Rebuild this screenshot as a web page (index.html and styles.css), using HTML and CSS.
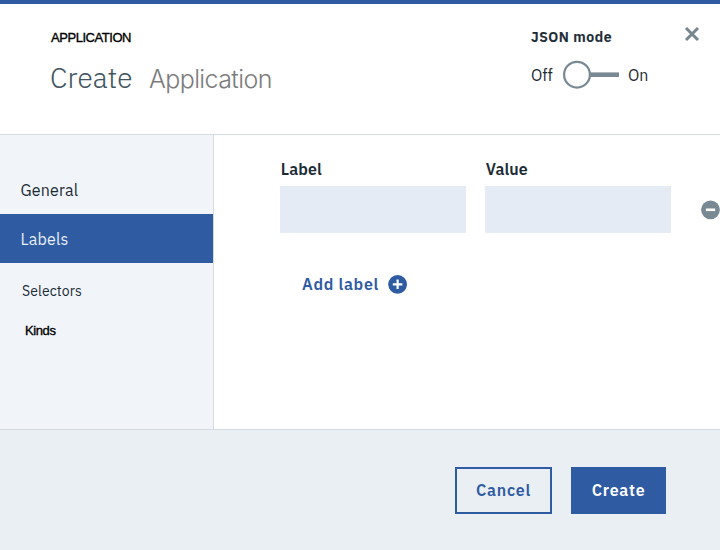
FILE: index.html
```html
<!DOCTYPE html>
<html lang="en">
<head>
<meta charset="utf-8">
<title>Create Application</title>
<link rel="stylesheet" href="styles.css">
</head>
<body>
<div class="modal">
  <header class="header">
    <div class="heading">
      <div class="eyebrow">APPLICATION</div>
      <h1 class="title"><span class="title-action">Create</span><span class="title-kind">Application</span></h1>
    </div>
    <div class="mode">
      <div class="mode-label">JSON mode</div>
      <div class="mode-switch">
        <span class="off">Off</span>
        <svg class="toggle" width="58" height="30" viewBox="0 0 58 30" fill="none" stroke="#798993"><path d="M28 14.7h29" stroke-width="4.6"/><circle cx="15" cy="14.7" r="12.9" fill="#fff" stroke-width="2.2"/></svg>
        <span class="on">On</span>
      </div>
    </div>
    <button class="close" aria-label="Close"><svg width="16" height="16" viewBox="0 0 16 16" fill="none" stroke="#75868f" stroke-width="3"><path d="M2 2l12 12M14 2L2 14"/></svg></button>
  </header>
  <div class="body">
    <nav class="sidebar">
      <a class="item general"><span>General</span></a>
      <a class="item labels"><span>Labels</span></a>
      <a class="item selectors"><span>Selectors</span></a>
      <a class="item kinds"><span>Kinds</span></a>
    </nav>
    <main class="content">
      <div class="fields">
        <div class="field"><label class="field-label" for="label">Label</label><input id="label"></div>
        <div class="field"><label class="field-label" for="value">Value</label><input id="value"></div>
        <button class="remove" aria-label="Remove"><svg width="20" height="20" viewBox="0 0 20 20"><circle cx="9.5" cy="9.8" r="9.4" fill="#798993"/><path d="M4.9 9.8h9.2" stroke="#fff" stroke-width="2.6"/></svg></button>
      </div>
      <button class="add"><span>Add label</span><svg width="20" height="20" viewBox="0 0 20 20"><circle cx="9.6" cy="10.3" r="9.4" fill="#2f5ba3"/><path d="M4.8 10.3h9.6M9.6 5.5v9.6" stroke="#fff" stroke-width="2.2"/></svg></button>
    </main>
  </div>
  <footer class="footer">
    <button class="btn cancel"><span>Cancel</span></button>
    <button class="btn create"><span>Create</span></button>
  </footer>
</div>
</body>
</html>
```
FILE: styles.css
```css
* { box-sizing: border-box; }
body { margin: 0; background: #fff; color: #1b2b36; font-family: "IBM Plex Sans", Roboto, sans-serif; }
button { padding: 0; border: 0; background: none; font-family: inherit; }
svg { display: block; flex: none; }
span { white-space: nowrap; }
.modal { width: 720px; height: 550px; overflow: hidden; display: grid; grid-template-rows: 135px 294px 121px; }

.header { display: flex; align-items: flex-start; border-top: 4px solid #2f5ba3; border-bottom: 1px solid #d5dce1; }
.heading { width: 531px; padding: 26px 0 0 51px; }
.eyebrow { font: 13px/16px "Liberation Sans", Arial, sans-serif; letter-spacing: -0.45px; color: #000; -webkit-text-stroke: 0.35px #000; }
.title { display: flex; margin: 12px 0 0 -1px; font-weight: 300; line-height: 40px; }
.title-action { width: 99px; font-size: 28px; letter-spacing: 0.15px; color: #42535f; -webkit-text-stroke: 0.1px #42535f; }
.title-kind { font-family: Inter, sans-serif; font-size: 25px; letter-spacing: -0.6px; color: #7c7c7c; padding-top: 1px; }
.mode { width: 153px; padding-top: 23px; }
.mode-label { font-size: 14px; line-height: 20px; font-weight: 600; letter-spacing: 0.55px; -webkit-text-stroke: 0.2px #1b2b36; }
.mode-switch { display: flex; align-items: center; padding-top: 13px; font-size: 16px; line-height: 30px; }
.off { width: 31px; }
.toggle { margin-right: 8px; }
.close { margin-top: 22px; }

.body { display: flex; }
.sidebar { width: 214px; display: flex; flex-direction: column; padding-top: 31px; background: #f1f5fa; border-right: 1px solid #d5dce1; }
.item { display: flex; align-items: center; height: 49px; padding-left: 20.5px; font-size: 16px; letter-spacing: 0.2px; }
.general { height: 48px; }
.labels { background: #2f5ba3; color: #e8eef8; }
.selectors { height: 56px; padding-left: 22px; font-size: 14px; letter-spacing: 0.1px; }
.kinds { height: 23px; padding-left: 25px; font-family: "Liberation Sans", Arial, sans-serif; font-size: 13px; letter-spacing: -0.4px; color: #000; -webkit-text-stroke: 0.35px #000; }

.content { flex: 1; padding: 22px 0 0 66px; }
.fields { display: flex; gap: 18px; }
.field { width: 187px; flex: none; }
.field-label { display: block; padding-left: 0.8px; font-size: 16px; line-height: 24px; font-weight: 600; letter-spacing: 0.1px; }
.field input { display: block; width: 186px; height: 47px; margin-top: 5px; border: 0; background: #e4ebf5; outline: 0; }
.remove { align-self: flex-start; margin: 43px 0 0 11px; }
.add { display: flex; align-items: center; gap: 9px; margin: 41px 0 0 22px; color: #2f5ba3; font-size: 16px; font-weight: 600; letter-spacing: 0.7px; }

.footer { display: flex; align-items: flex-start; gap: 19px; padding: 37px 0 0 455px; background: #eaeff3; border-top: 1px solid #d5dce1; }
.btn { height: 47px; padding-bottom: 1px; font-size: 16px; font-weight: 600; letter-spacing: 0.75px; color: #2f5ba3; }
.cancel { width: 97px; border: 2px solid #2f5ba3; }
.create { width: 95px; background: #2f5ba3; color: #fff; }
```
